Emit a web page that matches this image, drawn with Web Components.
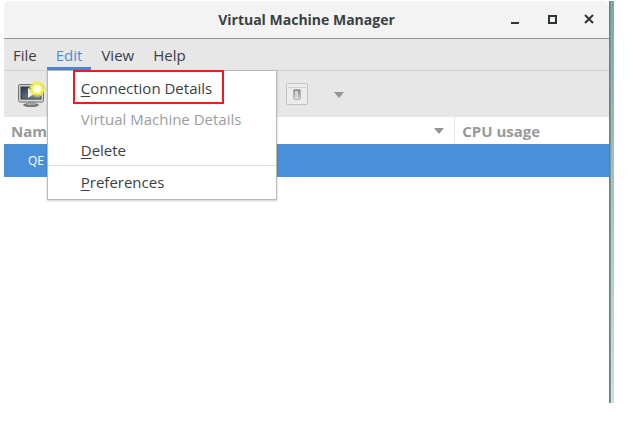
<!DOCTYPE html>
<html lang="en">
<head>
<meta charset="utf-8">
<title>Virtual Machine Manager</title>
<style>
  body {
    margin: 0;
    min-height: 100vh;
    box-sizing: border-box;
    padding: 1px 19px 30px 4px;
    display: flex;
    background: #ffffff;
    font-family: "Open Sans", "Noto Sans", sans-serif;
    font-size: 15px;
    color: #3b4043;
  }
</style>
</head>
<body>
<vm-window heading="Virtual Machine Manager">
  <menu-bar slot="menu">
    <menu-entry label="File"></menu-entry>
    <menu-entry label="Edit" open>
      <menu-item key="C" marked>onnection Details</menu-item>
      <menu-item disabled>Virtual Machine Details</menu-item>
      <menu-item key="D">elete</menu-item>
      <menu-item key="P" separated>references</menu-item>
    </menu-entry>
    <menu-entry label="View"></menu-entry>
    <menu-entry label="Help"></menu-entry>
  </menu-bar>
  <vm-toolbar slot="toolbar"></vm-toolbar>
  <vm-list></vm-list>
</vm-window>

<script>
const define = (name, html, setup) => {
  const template = document.createElement("template");
  template.innerHTML = html;
  customElements.define(name, class extends HTMLElement {
    connectedCallback() {
      if (this.shadowRoot) return;
      const root = this.attachShadow({ mode: "open" });
      root.appendChild(template.content.cloneNode(true));
      if (setup) setup(this, root);
    }
  });
};

define("vm-window", /*html*/ `
<style>
  :host {
    flex: 1;
    display: flex;
    min-width: 0;
  }
  .frame {
    flex: 1;
    min-width: 0;
    display: flex;
    flex-direction: column;
    background: #ffffff;
    border-radius: 5px 5px 0 0;
  }
  .desktop {
    width: 5px;
    background: linear-gradient(90deg, #64827f 0 1px, #779995 1px 2px, transparent 2px),
      linear-gradient(#79aaa6, #a3c2ba 45%, #cfe0da);
  }
  header {
    display: grid;
    grid-template-columns: 1fr auto 1fr;
    align-items: center;
    height: 38px;
    box-sizing: border-box;
    background: #f3f3f3;
    border-bottom: 1px solid #969896;
    border-radius: 5px 5px 0 0;
  }
  h1 {
    grid-column: 2;
    margin: 0;
    font-size: 14px;
    line-height: 20px;
    font-weight: bold;
  }
  .controls {
    display: flex;
    justify-content: flex-end;
    padding-right: 2px;
  }
  button {
    width: 37px;
    height: 28px;
    padding: 0 0 2px;
    border: 0;
    background: none;
    display: grid;
    place-items: center;
  }
  svg {
    width: 10px;
    height: 10px;
    fill: none;
    stroke: #2e3436;
    stroke-width: 2;
  }
</style>
<div class="frame">
  <header>
    <h1></h1>
    <div class="controls">
      <button aria-label="Minimize"><svg viewBox="0 0 10 10"><path d="M1 9h8"/></svg></button>
      <button aria-label="Maximize"><svg viewBox="0 0 10 10"><path d="M2 2h7v7h-7z"/></svg></button>
      <button aria-label="Close"><svg viewBox="0 0 10 10"><path d="M1 1l8 8M9 1l-8 8"/></svg></button>
    </div>
  </header>
  <slot name="menu"></slot>
  <slot name="toolbar"></slot>
  <slot></slot>
</div>
<div class="desktop"></div>
`, (el, root) => {
  root.querySelector("h1").textContent = el.getAttribute("heading");
});

define("menu-bar", /*html*/ `
<style>
  :host {
    display: flex;
    gap: 1px;
    height: 32px;
    box-sizing: border-box;
    background: #e7e7e7;
    border-bottom: 1px solid #d1d1d1;
  }
</style>
<slot></slot>
`);

define("menu-entry", /*html*/ `
<style>
  :host {
    display: block;
    position: relative;
  }
  .top {
    display: block;
    height: 31px;
    padding: 3px 9px 0;
    border: 0;
    border-bottom: 3px solid transparent;
    background: none;
    font: inherit;
    line-height: 20px;
    color: inherit;
  }
  :host([open]) .top {
    color: #4a90d9;
    border-color: #4a86cf;
  }
  .popup {
    display: none;
    position: absolute;
    z-index: 1;
    top: 100%;
    left: 0;
    width: 230px;
    box-sizing: border-box;
    padding: 1px 0 2px;
    background: #ffffff;
    border: 1px solid #b8b8b8;
    box-shadow: 0 1px 2px rgba(0, 0, 0, 0.2);
  }
  :host([open]) .popup {
    display: block;
  }
</style>
<button class="top"></button>
<div class="popup" role="menu"><slot></slot></div>
`, (el, root) => {
  root.querySelector(".top").textContent = el.getAttribute("label");
});

define("menu-item", /*html*/ `
<style>
  :host {
    display: block;
  }
  :host([separated]) {
    border-top: 1px solid #dedede;
  }
  button {
    display: flex;
    align-items: center;
    width: 100%;
    height: 31px;
    padding: 0 33px;
    border: 0;
    background: none;
    font: inherit;
    line-height: 20px;
    color: inherit;
    white-space: nowrap;
  }
  button:disabled {
    color: #9b9d9d;
  }
  .label {
    position: relative;
  }
  u {
    text-underline-offset: 2px;
  }
  :host([marked]) .label::after {
    content: "";
    position: absolute;
    inset: -8px -12px -6px -8px;
    border: 2px solid #ed1c24;
  }
</style>
<button role="menuitem"><span class="label"><u></u><slot></slot></span></button>
`, (el, root) => {
  root.querySelector("u").textContent = el.getAttribute("key") || "";
  root.querySelector("button").disabled = el.hasAttribute("disabled");
});

define("vm-toolbar", /*html*/ `
<style>
  :host {
    display: grid;
    grid-template-columns: 269px 44px 44px;
    align-items: center;
    height: 46px;
    padding-left: 13px;
    background: #e7e7e7;
  }
  button {
    padding: 0;
    border: 0;
    background: none;
    display: block;
    justify-self: start;
  }
  svg {
    display: block;
  }
  .shutdown-menu {
    padding: 2px 4px 0;
  }
</style>
<button aria-label="New virtual machine">
  <svg width="30" height="28" viewBox="0 0 30 28">
    <defs>
      <linearGradient id="screen" x2="1" y2="1"><stop stop-color="#2b3a4b"/><stop offset="1" stop-color="#8794a6"/></linearGradient>
      <radialGradient id="glow"><stop offset=".3" stop-color="#fffdd0"/><stop offset=".6" stop-color="#f1ea3c"/><stop offset="1" stop-color="#eee64a" stop-opacity="0"/></radialGradient>
    </defs>
    <ellipse cx="14" cy="25" rx="8" ry="2" fill="#777a77"/>
    <path d="M11 21h6l1 4h-8z" fill="#a5a8a4"/>
    <rect x="1.500" y="4.500" width="25" height="17.500" rx="1.500" fill="#d2d4d1" stroke="#70736f"/>
    <rect x="4" y="7" width="20" height="12" fill="url(#screen)" stroke="#343a40"/>
    <path d="M11 8l7 5-7 5z" fill="#f0f2f4"/>
    <circle cx="20" cy="9" r="9" fill="url(#glow)"/>
    <path d="M21 1l2 4 4-1-1 4 3 3-4 1-1 4-4-3-4 2v-5l-3-3 4-1-1-4 4 2z" fill="#f5f052"/>
    <circle cx="20" cy="9" r="4" fill="#fffee6"/>
  </svg>
</button>
<button aria-label="Shut down">
  <svg width="22" height="22" viewBox="0 0 22 22">
    <defs><linearGradient id="lever" x2="0" y2="1"><stop stop-color="#818181"/><stop offset=".5" stop-color="#aaaaaa"/><stop offset="1" stop-color="#d8d8d8"/></linearGradient></defs>
    <rect x=".5" y=".5" width="21" height="21" rx="1" fill="#ececec" stroke="#c2c2c2"/>
    <path d="M2 4.500h18" stroke="#d0d0d0"/>
    <rect x="7.500" y="6.500" width="7" height="10" rx="1" fill="url(#lever)" stroke="#b2b2b2"/>
    <rect x="9" y="8" width="3" height="8" fill="#d6d6d6"/>
  </svg>
</button>
<button class="shutdown-menu" aria-label="Shut down options">
  <svg width="10" height="6" viewBox="0 0 10 6"><path d="M0 0h10L5 6z" fill="#929595"/></svg>
</button>
`);

define("vm-list", /*html*/ `
<style>
  :host {
    display: block;
    flex: 1;
  }
  table {
    width: 100%;
    table-layout: fixed;
    border-collapse: collapse;
  }
  .name {
    width: 74.500%;
  }
  th {
    height: 27px;
    padding: 0 7px;
    box-sizing: border-box;
    text-align: left;
    font-size: 15px;
    line-height: 20px;
    color: #989a9a;
  }
  th + th {
    border-left: 1px solid #e6e6e6;
  }
  .head {
    display: flex;
    align-items: center;
    justify-content: space-between;
    padding-right: 3px;
  }
  td {
    height: 33px;
    box-sizing: border-box;
    padding: 0 24px;
    background: #4a90d9;
    color: #ffffff;
    font-size: 12px;
    line-height: 20px;
  }
</style>
<table>
  <thead>
    <tr>
      <th class="name">
        <div class="head">Name
          <svg width="10" height="6" viewBox="0 0 10 6"><path d="M0 0h10L5 6z" fill="#929595"/></svg>
        </div>
      </th>
      <th>CPU usage</th>
    </tr>
  </thead>
  <tbody>
    <tr><td>QE</td><td></td></tr>
  </tbody>
</table>
`);
</script>
</body>
</html>
